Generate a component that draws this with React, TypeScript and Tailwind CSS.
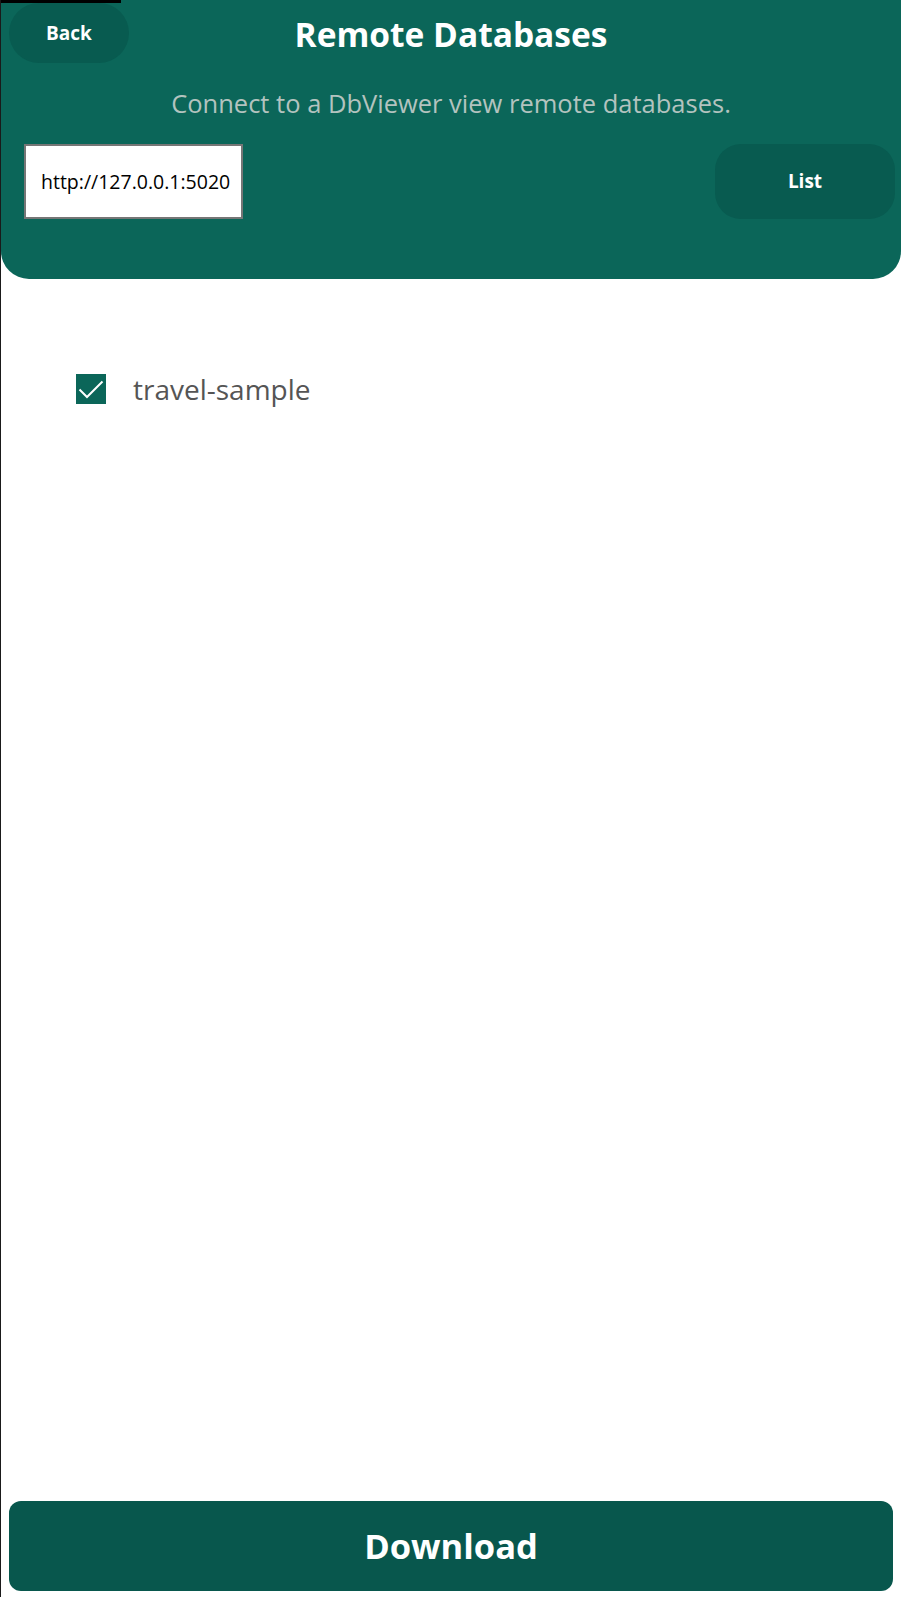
import { useState } from "react"

const font = { fontFamily: '"Open Sans", "Noto Sans", sans-serif' }

export default function App() {
  const [checked, setChecked] = useState(true)
  const [url, setUrl] = useState("http://127.0.0.1:5020")

  return (
    <div className="relative flex flex-col min-h-[1597px] w-full bg-white border-l border-[#1a1a1a]" style={font}>
      <div className="absolute top-0 left-0 w-[120px] h-[3px] bg-black" />

      {/* header */}
      <div className="h-[279px] bg-[#0b6659] rounded-b-[28px] flex flex-col">
        <div className="grid grid-cols-[128px_1fr_136px] items-start pt-[3px] pl-[8px]">
          <button className="w-[120px] h-[60px] rounded-full bg-[#085b50] text-white font-bold text-[19px]">
            Back
          </button>
          <h1 className="text-white font-bold text-[33.5px] text-center leading-none pt-[15px]">
            Remote Databases
          </h1>
          <div />
        </div>
        <p className="text-center text-[#b3c3bf] text-[25.5px] leading-none mt-[28px]">
          Connect to a DbViewer view remote databases.
        </p>
        <div className="flex items-center justify-between mt-[27px] pl-[23px] pr-[6px]">
          <input
            value={url}
            onChange={e => setUrl(e.target.value)}
            className="w-[219px] h-[75px] bg-white border-2 border-[#767676] pl-[15px] pr-[2px] text-[19.5px] text-black outline-none"
          />
          <button className="w-[180px] h-[75px] rounded-[26px] bg-[#085b50] text-white font-bold text-[19px]">
            List
          </button>
        </div>
      </div>

      {/* list */}
      <div className="flex items-center gap-[27px] pl-[75px] mt-[89px]">
        <button
          onClick={() => setChecked(c => !c)}
          className="w-[30px] h-[30px] bg-[#0b6659] flex items-center justify-center"
        >
          {checked && (
            <svg width="30" height="30" viewBox="0 0 30 30" fill="none">
              <path d="M3.5 15.5 L11 23 L26.5 7.5" stroke="white" strokeWidth="2" />
            </svg>
          )}
        </button>
        <span className="text-[28px] text-[#555555]">travel-sample</span>
      </div>

      <div className="grow" />

      <div className="px-[8px] pb-[6px]">
        <button className="w-full h-[90px] rounded-[12px] bg-[#08574d] text-white font-bold text-[34.5px]">
          Download
        </button>
      </div>
    </div>
  )
}
